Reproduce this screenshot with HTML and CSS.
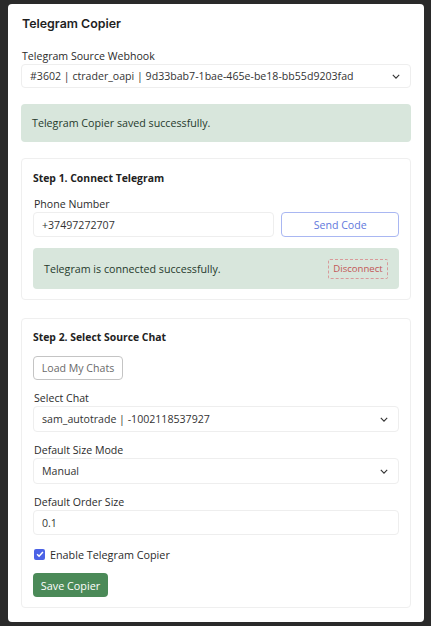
FILE: index.html
```html
<!DOCTYPE html>
<html>
<head>
<meta charset="utf-8">
<link rel="stylesheet" href="styles.css">
</head>
<body>
<div class="panel">
  <h1 class="title">Telegram Copier</h1>
  <div class="field top-field">
    <label class="label">Telegram Source Webhook</label>
    <div class="select"><span class="val">#3602 | ctrader_oapi | 9d33bab7-1bae-465e-be18-bb55d9203fad</span><svg class="chev" viewBox="0 0 10 6" width="8" height="5"><path d="M1 1l4 4 4-4" fill="none" stroke="#333" stroke-width="1.4"/></svg></div>
  </div>
  <div class="alert main-alert">Telegram Copier saved successfully.</div>

  <div class="card card1">
    <h2 class="card-title">Step 1. Connect Telegram</h2>
    <div class="field">
      <label class="label">Phone Number</label>
      <div class="row">
        <div class="input phone">+37497272707</div>
        <button class="btn btn-blue">Send Code</button>
      </div>
    </div>
    <div class="alert inner-alert">
      <span>Telegram is connected successfully.</span>
      <button class="btn btn-red">Disconnect</button>
    </div>
  </div>

  <div class="card card2">
    <h2 class="card-title">Step 2. Select Source Chat</h2>
    <div><button class="btn btn-grey">Load My Chats</button></div>
    <div class="field">
      <label class="label">Select Chat</label>
      <div class="select"><span class="val">sam_autotrade | -1002118537927</span><svg class="chev" viewBox="0 0 10 6" width="8" height="5"><path d="M1 1l4 4 4-4" fill="none" stroke="#333" stroke-width="1.4"/></svg></div>
    </div>
    <div class="field">
      <label class="label">Default Size Mode</label>
      <div class="select"><span class="val">Manual</span><svg class="chev" viewBox="0 0 10 6" width="8" height="5"><path d="M1 1l4 4 4-4" fill="none" stroke="#333" stroke-width="1.4"/></svg></div>
    </div>
    <div class="field">
      <label class="label">Default Order Size</label>
      <div class="input">0.1</div>
    </div>
    <label class="check-row">
      <span class="checkbox"><svg viewBox="0 0 12 12" width="10" height="10"><path d="M2.5 6.2l2.4 2.4 4.6-5" fill="none" stroke="#fff" stroke-width="1.8"/></svg></span>
      <span>Enable Telegram Copier</span>
    </label>
    <div><button class="btn btn-green">Save Copier</button></div>
  </div>
</div>
</body>
</html>
```

FILE: styles.css
```css
* { box-sizing: border-box; }
html, body { margin: 0; padding: 0; }
body {
  background: #2a2a2a;
  font-family: "Open Sans", "Noto Sans", sans-serif;
  color: #212529;
  font-size: 10.6px;
  padding: 4px 7px 4px 8px;
  height: 626px;
}
.panel {
  background: #fff;
  border-radius: 4px;
  width: 416px;
  height: 618px;
  padding: 10px 13px 14px 13px;
  display: flex;
  flex-direction: column;
}
.title {
  margin: 0 0 0 1px;
  font-family: "Inter", "Open Sans", sans-serif;
  font-weight: 600;
  font-size: 12.4px;
  line-height: 20px;
  color: #1f1f1f;
}
.top-field { margin-top: 14px; }
.field { display: flex; flex-direction: column; }
.label {
  font-size: 10.6px;
  line-height: 16px;
  color: #2b2b2b;
  padding-left: 1px;
}
.select, .input {
  height: 25px;
  border: 1px solid #eeeeee;
  border-radius: 4px;
  display: flex;
  align-items: center;
  padding: 0 8px;
  font-size: 10.6px;
  color: #333;
  background: #fff;
}
.card2 .select { height: 26px; }
.val { flex: 1; }
.select { padding-right: 10px; }
.top-field .select { height: 24px; }
.chev { flex: none; display: block; }
.alert {
  background: #d8e6dc;
  border-radius: 4px;
  color: #263a2c;
  font-size: 10.7px;
  display: flex;
  align-items: center;
}
.main-alert {
  margin-top: 16px;
  height: 38px;
  padding: 0 11px;
}
.card {
  border: 1px solid #efefef;
  border-radius: 4px;
  padding: 10px 11px;
  display: flex;
  flex-direction: column;
}
.card1 { margin-top: 16px; height: 142px; }
.card2 { margin-top: 18px; height: 290px; gap: 10px; padding-top: 9px; }
.card-title {
  margin: 0;
  font-size: 10.4px;
  font-weight: 700;
  line-height: 18px;
  color: #222;
}
.card1 .field { margin-top: 9px; }
.row { display: flex; gap: 7px; }
.phone { width: 242px; height: 25px; }
.btn {
  font-family: "Open Sans", "Noto Sans", sans-serif;
  font-size: 10.6px;
  border-radius: 4px;
  background: #fff;
  cursor: pointer;
  padding: 0;
}
.btn-blue {
  width: 118px;
  height: 25px;
  border: 1px solid #a9b7f2;
  color: #6278dc;
}
.inner-alert {
  margin-top: 11px;
  height: 42px;
  padding: 0 11px 0 11px;
  justify-content: space-between;
}
.btn-red {
  height: 20px;
  width: 60px;
  border: 1px dashed #d89a9a;
  color: #c25656;
  background: transparent;
  font-size: 9.6px;
  border-radius: 2px;
}
.btn-grey {
  height: 24px;
  width: 90px;
  border: 1px solid #c4c4c4;
  color: #6a6a6a;
}
.check-row {
  display: flex;
  align-items: center;
  gap: 5px;
  height: 16px;
  margin-top: 1px;
  font-size: 10.8px;
  color: #2b2b2b;
}
.checkbox {
  width: 11px;
  height: 11px;
  border-radius: 2px;
  background: #4b62e6;
  display: flex;
  align-items: center;
  justify-content: center;
  margin-left: 1px;
}
.btn-green {
  height: 24px;
  width: 75px;
  border: none;
  background: #4b8a58;
  color: #fff;
  font-size: 10.8px;
  margin-top: 1px;
}
```
